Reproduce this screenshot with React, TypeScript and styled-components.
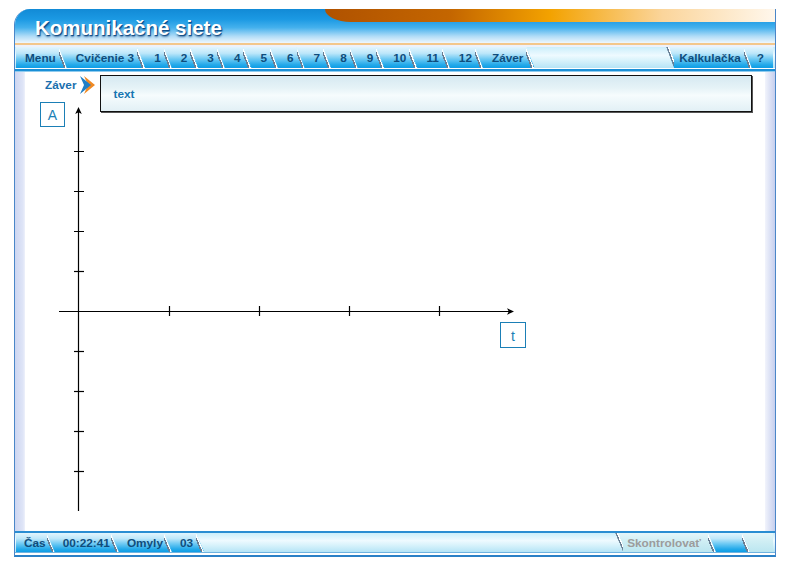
import React from 'react';
import styled, { createGlobalStyle } from 'styled-components';

const SL = 8;
const LINE = '#6a7f94';

const GlobalStyle = createGlobalStyle`
  html, body { margin: 0; padding: 0; background: #fff; }
  body { font-family: "Liberation Sans", Arial, sans-serif; }
`;

const Page = styled.div`
  padding: 9px 0 0 14px;
`;

const Frame = styled.div`
  width: 762px;
  box-sizing: border-box;
  border-left: 1px solid #4a86c8;
  border-right: 1px solid #4a86c8;
  border-bottom: 2px solid #2b80c6;
  border-top-left-radius: 16px;
  overflow: hidden;
  background: #fff;
`;

const Header = styled.header`
  position: relative;
  height: 34px;
  box-sizing: border-box;
  display: flex;
  align-items: center;
  padding: 3px 0 0 20px;
  background: linear-gradient(#128ad6 0%, #1b99e3 30%, #45b1ed 55%, #b0dcf7 80%, #eef7fd 100%);
`;

const OrangeBand = styled.div`
  position: absolute;
  top: 0;
  right: 0;
  width: 450px;
  height: 13px;
  background: linear-gradient(to right, #b05200 0%, #c46600 28%, #f3a200 50%, #fbd59b 75%, #fff7ec 100%);
  border-bottom-left-radius: 26px 13px;
`;

const Title = styled.h1`
  position: relative;
  margin: 0;
  font-size: 20.5px;
  font-weight: bold;
  color: #fff;
  text-shadow: 1px 1px 0 rgba(0, 60, 120, 0.75), 1px 2px 2px rgba(0, 50, 110, 0.6);
`;

const HeaderRule = styled.div`
  height: 2px;
  background: #f3c78b;
  border-bottom: 2px solid #eef1fa;
`;

const TabBar = styled.nav<{ $h: number }>`
  display: flex;
  justify-content: space-between;
  height: ${p => p.$h}px;
  padding: 0 2px 0 1px;
  background: linear-gradient(#cbeefb 0%, #eefaff 40%, #d7f2fb 65%, #b5e4f6 100%);
`;

const TabGroup = styled.div`
  display: flex;
  height: 100%;
`;

type Edge = 'flat' | 'slant' | 'join';

const rightLine = `linear-gradient(to top right, transparent calc(50% - 2.8px), ${LINE} calc(50% - 2.8px), ${LINE} calc(50% - 1.3px), #ffffff calc(50% - 1.3px), #ffffff calc(50% - 0.1px), transparent calc(50% - 0.1px)) right top / ${SL}px 100% no-repeat`;
const leftLine = `linear-gradient(to top right, transparent calc(50% + 0.1px), ${LINE} calc(50% + 0.1px), ${LINE} calc(50% + 1.6px), #ffffff calc(50% + 1.6px), #ffffff calc(50% + 2.8px), transparent calc(50% + 2.8px)) left top / ${SL}px 100% no-repeat`;

const bases = {
  normal: 'linear-gradient(#e2f5fd 0%, #bde7fa 30%, #6ac8f3 58%, #22a9ea 85%, #0f9de4 100%)',
  pale: 'linear-gradient(#e4f6fa 0%, #cfeef4 45%, #bbe6f0 100%)',
};

const Tab = styled.div<{
  $left: Edge;
  $right: 'flat' | 'slant';
  $variant?: 'normal' | 'pale';
  $pl: number;
  $pr: number;
  $muted?: boolean;
}>`
  display: flex;
  align-items: center;
  height: 100%;
  box-sizing: border-box;
  white-space: nowrap;
  font-size: 11.8px;
  font-weight: bold;
  color: ${p => (p.$muted ? '#9c9c9c' : '#0f4d7c')};
  margin-left: ${p => (p.$left === 'join' ? -SL : 0)}px;
  padding-left: ${p => p.$pl + (p.$left === 'flat' ? 0 : SL)}px;
  padding-right: ${p => p.$pr + (p.$right === 'slant' ? SL : 0)}px;
  background: ${p =>
    [p.$right === 'slant' ? rightLine : null, p.$left === 'slant' ? leftLine : null, bases[p.$variant || 'normal']]
      .filter(Boolean)
      .join(', ')};
  clip-path: ${p =>
    `polygon(0 0, ${p.$right === 'slant' ? `calc(100% - ${SL}px) 0` : '100% 0'}, 100% 100%, ${
      p.$left === 'flat' ? '0 100%' : `${SL}px 100%`
    })`};
`;

const BarRule = styled.div`
  height: 2px;
  background: #1a8fd6;
  border-top: 1px solid #ffffff;
  border-bottom: 1px solid #8fcbee;
`;

const Content = styled.main`
  height: 459px;
  padding: 0 10px;
  background:
    linear-gradient(to right, #cdd6f1, #dfe5f7 8px, #eef1fb 10px) left top / 10px 100% no-repeat,
    linear-gradient(to right, #f2f4fc, #c6cfee) right top / 10px 100% no-repeat,
    #ffffff;
`;

const TopRow = styled.div`
  display: flex;
  align-items: flex-start;
  padding: 3px 13px 0 20px;
`;

const SectionLabel = styled.div`
  display: flex;
  align-items: center;
  height: 20px;
  font-size: 11.8px;
  font-weight: bold;
  color: #1a6fae;
`;

const ArrowIcon = styled.svg`
  display: block;
  margin-left: 2px;
`;

const TextBox = styled.div`
  flex: 1;
  height: 37px;
  box-sizing: border-box;
  margin-left: 4px;
  padding-left: 12px;
  display: flex;
  align-items: center;
  border: 1px solid #111;
  box-shadow: 1px 1px 0 #555;
  background: linear-gradient(#d6e9f1 0%, #e6f3f7 35%, #f6fcfd 55%, #e2f0f5 100%);
  font-size: 11.8px;
  font-weight: bold;
  color: #1776b2;
`;

const ChartSvg = styled.svg`
  display: block;
  margin-top: -12px;
`;

const BottomRule = styled.div`
  height: 2px;
  background: #2a8dd2;
`;

const BottomLines = styled.div`
  height: 1px;
  background: #6fb3e0;
  border-bottom: 2px solid #ffffff;
`;

const AXIS = '#000';
const LABEL = '#1b7fb6';

const yTicks = [151, 191, 231, 271, 351, 391, 431, 471];
const xTicks = [169, 259, 349, 439];

const Chart = () => (
  <ChartSvg width={540} height={420} viewBox="25 100 540 420">
    <line x1={78.5} y1={111} x2={78.5} y2={511} stroke={AXIS} strokeWidth={1.2} />
    <polygon points="78.5,107 75.2,114 78.5,112.2 81.8,114" fill={AXIS} />
    <line x1={59} y1={311.5} x2={510} y2={311.5} stroke={AXIS} strokeWidth={1.2} />
    <polygon points="514,311.5 507,308.2 508.8,311.5 507,314.8" fill={AXIS} />
    {yTicks.map(y => (
      <line key={y} x1={74} y1={y + 0.5} x2={84} y2={y + 0.5} stroke={AXIS} strokeWidth={1.2} />
    ))}
    {xTicks.map(x => (
      <line key={x} x1={x + 0.5} y1={306} x2={x + 0.5} y2={316} stroke={AXIS} strokeWidth={1.2} />
    ))}
    <rect x={40.5} y={102.5} width={24} height={24} fill="#fff" stroke={LABEL} strokeWidth={1} />
    <text x={52.5} y={119.5} textAnchor="middle" fontSize={14} fill={LABEL} fontFamily="Liberation Sans, Arial, sans-serif">
      A
    </text>
    <rect x={500.5} y={322.5} width={25} height={25} fill="#fff" stroke={LABEL} strokeWidth={1} />
    <text x={513} y={340.5} textAnchor="middle" fontSize={14} fill={LABEL} fontFamily="Liberation Sans, Arial, sans-serif">
      t
    </text>
  </ChartSvg>
);

const topTabs = ['Cvičenie 3', '1', '2', '3', '4', '5', '6', '7', '8', '9', '10', '11', '12', 'Záver'];

export default function App() {
  return (
    <>
      <GlobalStyle />
      <Page>
        <Frame>
          <Header>
            <OrangeBand />
            <Title>Komunikačné siete</Title>
          </Header>
          <HeaderRule />
          <TabBar $h={21}>
            <TabGroup>
              <Tab $left="flat" $right="slant" $pl={9} $pr={3}>Menu</Tab>
              {topTabs.map(t => (
                <Tab key={t} $left="join" $right="slant" $pl={9} $pr={3}>
                  {t}
                </Tab>
              ))}
            </TabGroup>
            <TabGroup>
              <Tab $left="slant" $right="slant" $pl={5} $pr={3}>Kalkulačka</Tab>
              <Tab $left="join" $right="flat" $pl={5} $pr={9}>?</Tab>
            </TabGroup>
          </TabBar>
          <BarRule />
          <Content>
            <TopRow>
              <SectionLabel>
                Záver
                <ArrowIcon width={18} height={20} viewBox="0 0 18 20">
                  <polygon points="6,1 17,10 6,19 10,10" fill="#f08a24" />
                  <polygon points="2,1 13,10 2,19 6,10" fill="#1f7fc6" />
                </ArrowIcon>
              </SectionLabel>
              <TextBox>text</TextBox>
            </TopRow>
            <Chart />
          </Content>
          <BottomRule />
          <TabBar $h={19}>
            <TabGroup>
              <Tab $left="flat" $right="slant" $pl={8} $pr={1}>Čas</Tab>
              <Tab $left="join" $right="slant" $pl={8} $pr={1}>00:22:41</Tab>
              <Tab $left="join" $right="slant" $pl={8} $pr={1}>Omyly</Tab>
              <Tab $left="join" $right="slant" $pl={8} $pr={3}>03</Tab>
            </TabGroup>
            <TabGroup>
              <Tab $left="slant" $right="slant" $variant="pale" $muted $pl={4} $pr={7}>Skontrolovať</Tab>
              <Tab $left="join" $right="slant" $pl={13} $pr={13}></Tab>
              <Tab $left="join" $right="flat" $variant="pale" $pl={12} $pr={11}></Tab>
            </TabGroup>
          </TabBar>
          <BottomLines />
        </Frame>
      </Page>
    </>
  );
}
